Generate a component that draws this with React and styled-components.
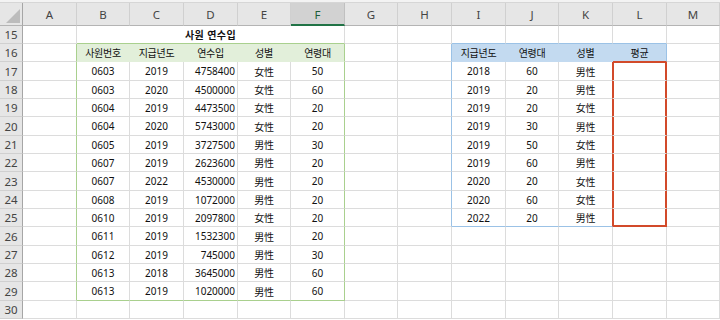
import styled, { createGlobalStyle } from "styled-components";

const GlobalStyle = createGlobalStyle`
  html, body {
    margin: 0;
    padding: 0;
    background: #ffffff;
    overflow: hidden;
  }
  body {
    font-family: "Noto Sans", "Noto Sans CJK KR", sans-serif;
  }
`;

const LETTERS = ["A", "B", "C", "D", "E", "F", "G", "H", "I", "J", "K", "L", "M"];
const WIDTHS = [54, 53, 54, 54, 53, 54, 53, 54, 54, 53, 54, 54, 53];
const ROWS = Array.from({ length: 16 }, (_, i) => 15 + i);
const HEIGHTS = ROWS.map((_, i) => (i % 3 === 2 ? 19 : 18));

const GRID = "#dcdcdc";
const GREEN = "#a9d08e";
const GREEN_BG = "#e2efda";
const BLUE = "#9bc2e6";
const BLUE_BG = "#c3daf0";
const RED = "#d24a2a";

const employees = [
  ["0603", "2019", "4758400", "女性", "50"],
  ["0603", "2020", "4500000", "女性", "60"],
  ["0604", "2019", "4473500", "女性", "20"],
  ["0604", "2020", "5743000", "女性", "20"],
  ["0605", "2019", "3727500", "男性", "30"],
  ["0607", "2019", "2623600", "男性", "20"],
  ["0607", "2022", "4530000", "男性", "20"],
  ["0608", "2019", "1072000", "男性", "20"],
  ["0610", "2019", "2097800", "女性", "20"],
  ["0611", "2019", "1532300", "男性", "20"],
  ["0612", "2019", "745000", "男性", "30"],
  ["0613", "2018", "3645000", "男性", "60"],
  ["0613", "2019", "1020000", "男性", "60"],
];

const summary = [
  ["2018", "60", "男性", ""],
  ["2019", "20", "男性", ""],
  ["2019", "20", "女性", ""],
  ["2019", "30", "男性", ""],
  ["2019", "50", "女性", ""],
  ["2019", "60", "男性", ""],
  ["2020", "20", "女性", ""],
  ["2020", "60", "女性", ""],
  ["2022", "20", "男性", ""],
];

const greenHead = ["사원번호", "지급년도", "연수입", "성별", "연령대"];
const blueHead = ["지급년도", "연령대", "성별", "평균"];

const inGreen = (r, c) => r >= 16 && r <= 29 && c >= 1 && c <= 5;
const inBlue = (r, c) => r >= 16 && r <= 25 && c >= 8 && c <= 11;
const inRed = (r, c) => r >= 17 && r <= 25 && c === 11;

function edge(r1, c1, r2, c2) {
  if (inRed(r1, c1) !== inRed(r2, c2)) return RED;
  if (inBlue(r1, c1) !== inBlue(r2, c2)) return BLUE;
  if (inGreen(r1, c1) !== inGreen(r2, c2)) return GREEN;
  if (r1 === 16 && inGreen(r1, c1)) return GREEN_BG;
  if (r1 === 16 && inBlue(r1, c1)) return BLUE_BG;
  return GRID;
}

function content(r, c) {
  if (r === 16 && inGreen(r, c)) return { text: greenHead[c - 1], bg: GREEN_BG };
  if (r === 16 && inBlue(r, c)) return { text: blueHead[c - 8], bg: BLUE_BG };
  if (inGreen(r, c)) {
    return { text: employees[r - 17][c - 1], right: c === 3 };
  }
  if (inBlue(r, c)) return { text: summary[r - 17][c - 8] };
  return { text: "" };
}

function redShadow(r, c) {
  if (!inRed(r, c)) return "none";
  const parts = [`inset 1px 0 ${RED}`, `inset -1px 0 ${RED}`];
  if (r === 17) parts.push(`inset 0 1px ${RED}`);
  if (r === 25) parts.push(`inset 0 -1px ${RED}`);
  return parts.join(", ");
}

const Sheet = styled.div`
  width: 720px;
  height: 320px;
  overflow: hidden;
  display: flex;
  flex-direction: column;
`;

const TopStrip = styled.div`
  height: 2px;
  flex: none;
  background: #f3f3f3;
  border-bottom: 1px solid #d6d6d6;
`;

const Grid = styled.div`
  display: grid;
  grid-template-columns: 23px ${WIDTHS.map((w) => `${w}px`).join(" ")};
  grid-template-rows: 23px ${HEIGHTS.map((h) => `${h}px`).join(" ")};
`;

const Corner = styled.div`
  background: #e6e6e6;
  border-right: 1px solid #a6a6a6;
  border-bottom: 1px solid #b4b4b4;
  box-sizing: border-box;
  position: relative;
  display: flex;
  align-items: flex-end;
  justify-content: flex-end;
  padding: 0 2px 2px 0;
`;

const ColHead = styled.div`
  box-sizing: border-box;
  background: ${(p) => (p.$selected ? "#d2d2d2" : "#e6e6e6")};
  border-right: 1px solid ${(p) => (p.$selected ? "#c0c0c0" : "#d0d0d0")};
  border-bottom: ${(p) => (p.$selected ? "2px solid #217346" : "1px solid #b4b4b4")};
  color: ${(p) => (p.$selected ? "#1d5e38" : "#444444")};
  font-family: "Noto Sans", sans-serif;
  font-size: 11.5px;
  display: flex;
  align-items: center;
  justify-content: center;
  padding-top: 1px;
`;

const RowHead = styled.div`
  box-sizing: border-box;
  background: #e6e6e6;
  border-right: 1px solid #a6a6a6;
  border-bottom: 1px solid #d0d0d0;
  color: #444444;
  font-family: "Noto Sans", sans-serif;
  font-size: 11.5px;
  display: flex;
  align-items: center;
  justify-content: center;
`;

const Cell = styled.div`
  box-sizing: border-box;
  border-right: 1px solid ${(p) => p.$r};
  border-bottom: 1px solid ${(p) => p.$b};
  background: ${(p) => p.$bg || "#ffffff"};
  box-shadow: ${(p) => p.$shadow};
  color: #111111;
  font-size: 10px;
  font-weight: ${(p) => (p.$bold ? 700 : 400)};
  display: flex;
  align-items: center;
  justify-content: ${(p) => (p.$right ? "flex-end" : "center")};
  padding: 0 ${(p) => (p.$right ? "2px" : "0")} 0 0;
  white-space: nowrap;
  letter-spacing: ${(p) => (p.$cjk ? "-0.3px" : "0")};
`;

const Title = styled(Cell)`
  grid-column: span 5;
  font-size: 10px;
  letter-spacing: 0.4px;
`;

const hasCjk = (s) => /[\u3131-\uD7A3\u4E00-\u9FFF]/.test(s);

export default function App() {
  const cells = [];
  cells.push(
    <Corner key="corner">
      <svg width="14" height="14" viewBox="0 0 14 14">
        <polygon points="14,0 14,14 0,14" fill="#bcbcbc" />
      </svg>
    </Corner>
  );
  LETTERS.forEach((l, i) => {
    cells.push(
      <ColHead key={`h${l}`} $selected={i === 5}>
        {l}
      </ColHead>
    );
  });

  ROWS.forEach((r) => {
    cells.push(<RowHead key={`r${r}`}>{r}</RowHead>);
    for (let c = 0; c < LETTERS.length; c++) {
      if (r === 15 && c === 1) {
        cells.push(
          <Title key="title" $r={GRID} $b={GREEN} $shadow="none" $bold $cjk>
            사원 연수입
          </Title>
        );
        c = 5;
        continue;
      }
      const info = content(r, c);
      cells.push(
        <Cell
          key={`${r}-${c}`}
          $r={edge(r, c, r, c + 1)}
          $b={edge(r, c, r + 1, c)}
          $bg={info.bg}
          $right={info.right}
          $cjk={hasCjk(info.text)}
          $shadow={redShadow(r, c)}
        >
          {info.text}
        </Cell>
      );
    }
  });

  return (
    <>
      <GlobalStyle />
      <Sheet>
        <TopStrip />
        <Grid>{cells}</Grid>
      </Sheet>
    </>
  );
}
